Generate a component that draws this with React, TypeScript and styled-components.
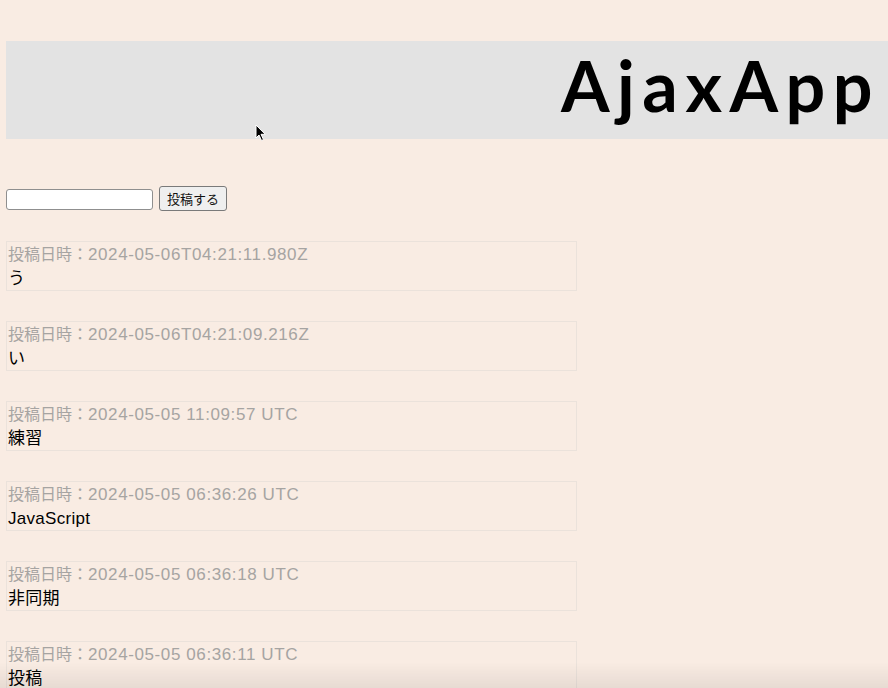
import styled, { createGlobalStyle } from "styled-components";

const GlobalStyle = createGlobalStyle`
  html, body {
    margin: 0;
    padding: 0;
    background: #f9ece3;
    overflow-x: hidden;
  }

  body {
    font-family: "Liberation Sans", "Noto Sans CJK JP", sans-serif;
  }
`;

const Page = styled.div`
  padding: 41px 0 0 6px;
`;

const Header = styled.header`
  background: #e3e3e3;
  height: 98px;
  display: flex;
  align-items: center;
  justify-content: flex-end;
  padding-right: 8px;
`;

const Title = styled.h1`
  margin: 0;
  font-family: Lato, "Liberation Sans", sans-serif;
  font-weight: 700;
  font-size: 70px;
  letter-spacing: 7.5px;
  color: #000;
  line-height: 1;
  padding-bottom: 10px;
`;

const PostForm = styled.form`
  display: flex;
  align-items: center;
  gap: 6px;
  margin-top: 47px;
`;

const TextInput = styled.input`
  box-sizing: border-box;
  width: 147px;
  height: 21px;
  margin: 1px 0 0;
  padding: 1px 3px;
  background: #fff;
  border: 1px solid #8f8f8f;
  border-radius: 3px;
  font-size: 13px;
`;

const SubmitButton = styled.button`
  box-sizing: border-box;
  width: 68px;
  height: 25px;
  padding: 0;
  background: #efefef;
  border: 1px solid #7a7a7a;
  border-radius: 3px;
  font-family: "Noto Sans CJK JP", sans-serif;
  font-size: 13px;
  color: #111;
`;

const PostList = styled.ul`
  list-style: none;
  margin: 30px 0 0;
  padding: 0;
  display: flex;
  flex-direction: column;
  gap: 30px;
`;

const PostCard = styled.li`
  box-sizing: border-box;
  width: 571px;
  height: 50px;
  padding: 1px 1px 0;
  border: 1px solid #ebe2db;
  line-height: 24px;
  overflow: hidden;
`;

const PostDate = styled.div`
  color: #a6a4a2;
  white-space: nowrap;
`;

const DateLabel = styled.span`
  font-size: 16px;
`;

const DateStamp = styled.span`
  font-size: 17px;
  letter-spacing: 0.6px;
`;

const PostBody = styled.div`
  color: #000;
  font-size: 17px;
  letter-spacing: 0.3px;
`;

const Cursor = styled.svg`
  position: absolute;
  left: 255px;
  top: 124px;
  pointer-events: none;
`;

const BottomShade = styled.div`
  position: fixed;
  left: 0;
  right: 0;
  bottom: 0;
  height: 26px;
  background: linear-gradient(rgba(0, 0, 0, 0), rgba(0, 0, 0, 0.07));
  pointer-events: none;
`;

const posts = [
  { date: "2024-05-06T04:21:11.980Z", body: "う" },
  { date: "2024-05-06T04:21:09.216Z", body: "い" },
  { date: "2024-05-05 11:09:57 UTC", body: "練習" },
  { date: "2024-05-05 06:36:26 UTC", body: "JavaScript" },
  { date: "2024-05-05 06:36:18 UTC", body: "非同期" },
  { date: "2024-05-05 06:36:11 UTC", body: "投稿" },
];

const App = () => {
  return (
    <Page>
      <GlobalStyle />
      <Header>
        <Title>AjaxApp</Title>
      </Header>

      <PostForm onSubmit={(e) => e.preventDefault()}>
        <TextInput type="text" />
        <SubmitButton type="submit">投稿する</SubmitButton>
      </PostForm>

      <PostList>
        {posts.map((post) => (
          <PostCard key={post.date}>
            <PostDate>
              <DateLabel>投稿日時：</DateLabel>
              <DateStamp>{post.date}</DateStamp>
            </PostDate>
            <PostBody>{post.body}</PostBody>
          </PostCard>
        ))}
      </PostList>

      <Cursor width="12" height="18" viewBox="0 0 12 18">
        <path d="M1 1 L1 14 L4 11 L6.5 16.5 L8.5 15.6 L6 10.3 L10.2 10.3 Z" fill="#000" stroke="#fff" strokeWidth="1" />
      </Cursor>
      <BottomShade />
    </Page>
  );
};

export default App;
